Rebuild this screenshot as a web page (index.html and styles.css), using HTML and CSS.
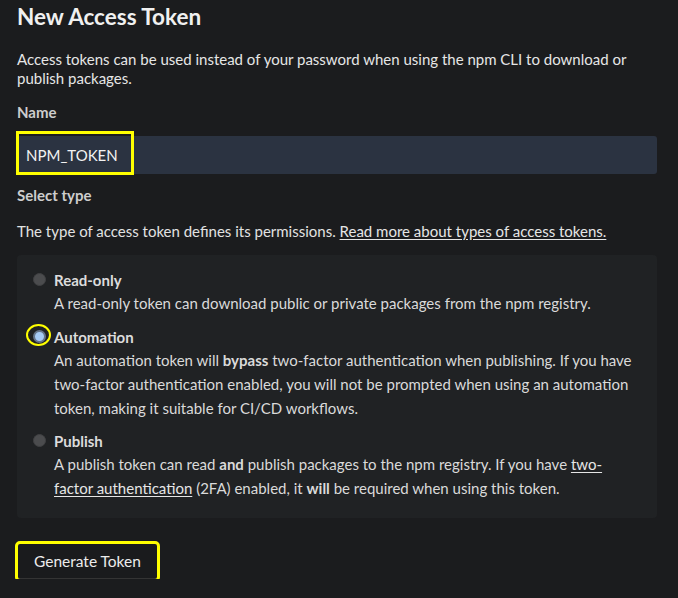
FILE: index.html
```html
<!DOCTYPE html>
<html>
<head>
<meta charset="utf-8">
<link rel="stylesheet" href="styles.css">
</head>
<body>
<main class="page">
  <h1 class="title">New Access Token</h1>
  <p class="intro">Access tokens can be used instead of your password when using the npm CLI to download or publish packages.</p>

  <label class="field-label label-name" for="name">Name</label>
  <div class="input-wrap">
    <input id="name" class="text-input" type="text" value="NPM_TOKEN">
    <span class="mark mark-input"></span>
  </div>

  <div class="field-label label-type">Select type</div>
  <p class="type-help">The type of access token defines its permissions. <a href="#" class="link">Read more about types of access tokens.</a></p>

  <div class="panel">
    <div class="option">
      <span class="radio"></span>
      <div class="option-body">
        <div class="option-title">Read-only</div>
        <div class="option-desc">A read-only token can download public or private packages from the npm registry.</div>
      </div>
    </div>
    <div class="option option-auto">
      <span class="radio radio-checked"><span class="mark mark-radio"></span></span>
      <div class="option-body">
        <div class="option-title">Automation</div>
        <div class="option-desc">An automation token will <b>bypass</b> two-factor authentication when publishing. If you have two-factor authentication enabled, you will not be prompted when using an automation token, making it suitable for CI/CD workflows.</div>
      </div>
    </div>
    <div class="option option-publish">
      <span class="radio"></span>
      <div class="option-body">
        <div class="option-title">Publish</div>
        <div class="option-desc">A publish token can read <b>and</b> publish packages to the npm registry. If you have <a href="#" class="link">two-factor authentication</a> (2FA) enabled, it <b>will</b> be required when using this token.</div>
      </div>
    </div>
  </div>

  <div class="actions">
    <button class="btn" type="button">Generate Token</button>
  </div>
</main>
</body>
</html>
```

FILE: styles.css
```css
html, body {
  margin: 0;
  padding: 0;
  background: #1b1c1e;
}
body {
  font-family: Lato, "Open Sans", sans-serif;
  color: #e2e2e2;
  font-size: 15px;
}
.page {
  padding: 0 21px 0 17px;
  display: flex;
  flex-direction: column;
}
.title {
  margin: 2px 0 0 0;
  font-size: 22.5px;
  line-height: 30px;
  font-weight: 700;
  color: #f0f0f0;
}
.intro {
  margin: 18px 0 0 0;
  line-height: 19px;
  color: #e6e6e6;
}
.field-label {
  display: block;
  font-weight: 700;
  color: #cdcdcd;
  line-height: 20px;
}
.label-name {
  margin-top: 14px;
}
.label-type {
  margin-top: 11px;
}
.input-wrap {
  position: relative;
  margin-top: 14px;
}
.text-input {
  display: block;
  box-sizing: border-box;
  width: 100%;
  height: 38px;
  border: 0;
  border-radius: 3px;
  background: #2b3341;
  color: #f2f2f2;
  font-family: inherit;
  font-size: 15px;
  padding: 0 9px;
  outline: none;
}
.mark {
  position: absolute;
  border: 3px solid #ffff00;
  pointer-events: none;
}
.mark-input {
  left: -1px;
  top: -5px;
  width: 112px;
  height: 38px;
}
.type-help {
  margin: 16px 0 0 0;
  line-height: 20px;
}
.link {
  color: #e6e6e6;
  text-decoration: underline;
  text-underline-offset: 2px;
}
.panel {
  margin-top: 14px;
  background: #202224;
  border-radius: 4px;
  padding: 14px 16px 18px 16px;
  display: flex;
  flex-direction: column;
}
.option {
  display: flex;
  gap: 8px;
  align-items: flex-start;
}
.option-auto {
  margin-top: 11px;
}
.option-publish {
  margin-top: 10px;
}
.radio {
  position: relative;
  flex: 0 0 auto;
  width: 13px;
  height: 13px;
  margin-top: 4px;
  border-radius: 50%;
  background: #4b4c4e;
  box-sizing: border-box;
  border: 1px solid #404143;
}
.radio-checked {
  background: #a6cbf6;
  border: 2px solid #66758a;
}
.mark-radio {
  left: -9px;
  top: -8px;
  width: 21px;
  height: 18px;
  border-width: 2.5px;
  border-radius: 50%;
}
.option-title {
  font-weight: 700;
  line-height: 22px;
  color: #dcdcdc;
}
.option-desc {
  line-height: 24px;
  color: #dadada;
}
.option-desc b {
  font-weight: 700;
}
.actions {
  margin-top: 26px;
  display: flex;
}
.btn {
  font-family: inherit;
  font-size: 15.5px;
  color: #ececec;
  background: #1a1b1d;
  border: 0;
  border-bottom: 1px solid #343434;
  border-radius: 2px;
  height: 35px;
  padding: 0 16px;
  outline: 3px solid #ffff00;
  outline-offset: 0;
  margin-left: 1px;
}
```
